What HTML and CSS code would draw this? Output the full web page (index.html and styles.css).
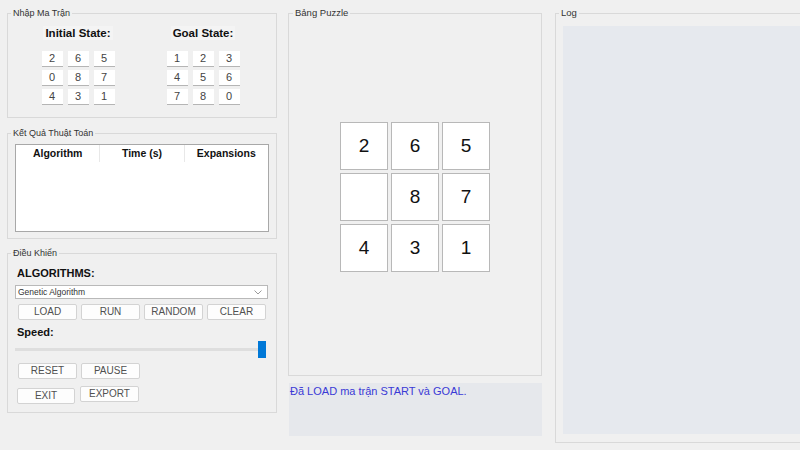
FILE: index.html
```html
<!DOCTYPE html>
<html>
<head>
<meta charset="utf-8">
<link rel="stylesheet" href="styles.css">
</head>
<body>
<div class="app">
  <div class="col col-left">
    <fieldset class="group g-matrix">
      <legend>Nhập Ma Trận</legend>
      <div class="states">
        <div class="state">
          <div class="state-title">Initial State:</div>
          <div class="cells">
            <div class="cell">2</div><div class="cell">6</div><div class="cell">5</div>
            <div class="cell">0</div><div class="cell">8</div><div class="cell">7</div>
            <div class="cell">4</div><div class="cell">3</div><div class="cell">1</div>
          </div>
        </div>
        <div class="state">
          <div class="state-title">Goal State:</div>
          <div class="cells">
            <div class="cell">1</div><div class="cell">2</div><div class="cell">3</div>
            <div class="cell">4</div><div class="cell">5</div><div class="cell">6</div>
            <div class="cell">7</div><div class="cell">8</div><div class="cell">0</div>
          </div>
        </div>
      </div>
    </fieldset>

    <fieldset class="group g-results">
      <legend>Kết Quả Thuật Toán</legend>
      <div class="table">
        <div class="thead">
          <div class="th">Algorithm</div>
          <div class="th">Time (s)</div>
          <div class="th">Expansions</div>
        </div>
      </div>
    </fieldset>

    <fieldset class="group g-control">
      <legend>Điều Khiển</legend>
      <div class="control-body">
        <div class="label">ALGORITHMS:</div>
        <div class="select">
          <span>Genetic Algorithm</span>
          <svg class="chev" width="8" height="5" viewBox="0 0 8 5"><path d="M0.5 0.5 L4 4 L7.5 0.5" fill="none" stroke="#9a9a9a" stroke-width="1"/></svg>
        </div>
        <div class="btn-row">
          <div class="btn">LOAD</div>
          <div class="btn">RUN</div>
          <div class="btn">RANDOM</div>
          <div class="btn">CLEAR</div>
        </div>
        <div class="label label-speed">Speed:</div>
        <div class="slider">
          <div class="track"></div>
          <div class="thumb"></div>
        </div>
        <div class="btn-row row-reset">
          <div class="btn">RESET</div>
          <div class="btn">PAUSE</div>
        </div>
        <div class="btn-row row-exit">
          <div class="btn btn-exit">EXIT</div>
          <div class="btn btn-export">EXPORT</div>
        </div>
      </div>
    </fieldset>
  </div>

  <div class="col col-mid">
    <fieldset class="group g-puzzle">
      <legend>Bảng Puzzle</legend>
      <div class="board">
        <div class="tile">2</div><div class="tile">6</div><div class="tile">5</div>
        <div class="tile"></div><div class="tile">8</div><div class="tile">7</div>
        <div class="tile">4</div><div class="tile">3</div><div class="tile">1</div>
      </div>
    </fieldset>
    <div class="status">Đã LOAD ma trận START và GOAL.</div>
  </div>

  <div class="col col-right">
    <fieldset class="group g-log">
      <legend>Log</legend>
      <div class="log-wrap"><div class="log-area"></div></div>
    </fieldset>
  </div>
</div>
</body>
</html>
```
FILE: styles.css
```css
html, body {
  margin: 0;
  padding: 0;
  background: #f0f0f0;
  width: 800px;
  height: 450px;
  overflow: hidden;
  font-family: "Liberation Sans", Arial, sans-serif;
  color: #222;
}

.app {
  display: flex;
  align-items: flex-start;
  padding: 7px 0 0 7px;
}

.col {
  display: flex;
  flex-direction: column;
  flex-shrink: 0;
}

.col-left { width: 270px; margin-right: 11px; }
.col-mid { width: 254px; margin-right: 13px; }
.col-right { width: 262px; }

.group {
  box-sizing: border-box;
  margin: 0;
  padding: 0;
  border: 1px solid #d9d9d9;
  min-width: 0;
}

.group legend {
  font-size: 9px;
  line-height: 12px;
  color: #333;
  padding: 0 2px;
  margin-left: 3px;
}

/* Matrix input */
.g-matrix { height: 111px; }

.states {
  display: flex;
  padding-left: 12px;
  gap: 9px;
}

.state {
  width: 116px;
  display: flex;
  flex-direction: column;
  align-items: center;
}

.state-title {
  margin-top: 7px;
  font-size: 11.5px;
  line-height: 14px;
  font-weight: bold;
  color: #111;
  background: #f4f4f4;
  padding: 0 2px;
}

.cells {
  margin-top: 11px;
  display: grid;
  grid-template-columns: repeat(3, 21px);
  grid-auto-rows: 16px;
  column-gap: 5px;
  row-gap: 3px;
}

.cell {
  box-sizing: border-box;
  background: #fff;
  border-bottom: 1px solid #b5b5b5;
  font-size: 11px;
  line-height: 15px;
  text-align: center;
  color: #444;
}

/* Results */
.g-results { height: 112px; margin-top: 9px; }

.table {
  box-sizing: border-box;
  margin: 5px 0 0 7px;
  width: 254px;
  height: 88px;
  background: #fff;
  border: 1px solid #a8a8a8;
}

.thead {
  display: flex;
  height: 17px;
}

.th {
  flex: 1;
  font-size: 10.5px;
  font-weight: bold;
  line-height: 16px;
  text-align: center;
  color: #111;
  border-right: 1px solid #e8e8e8;
}
.th:last-child { border-right: none; }

/* Control */
.g-control { height: 166px; margin-top: 8px; }

.control-body { padding-left: 7px; }

.label {
  margin-top: 7px;
  margin-left: 2px;
  font-size: 11px;
  line-height: 14px;
  font-weight: bold;
  color: #111;
}

.select {
  box-sizing: border-box;
  margin-top: 5px;
  width: 253px;
  height: 14px;
  background: #fff;
  border: 1px solid #b9b9b9;
  display: flex;
  align-items: center;
  justify-content: space-between;
  padding: 0 5px 0 2px;
  font-size: 8.5px;
  color: #333;
}

.chev { display: block; }

.btn-row {
  display: flex;
  gap: 4px;
  margin-left: 3px;
  margin-top: 5px;
}

.btn {
  box-sizing: border-box;
  width: 59px;
  height: 16px;
  background: #fdfdfd;
  border: 1px solid #d3d3d3;
  border-radius: 2px;
  font-size: 10px;
  line-height: 14px;
  text-align: center;
  color: #505050;
}

.label-speed { margin-top: 5px; }

.slider {
  margin-top: 2px;
  width: 252px;
  height: 17px;
  display: flex;
  align-items: center;
}

.track {
  width: 247px;
  height: 3px;
  background: #dedede;
}

.thumb {
  margin-left: -4px;
  width: 8px;
  height: 17px;
  background: #0078d7;
}

.row-reset { margin-top: 5px; }
.row-exit { margin-top: 7px; margin-left: 2px; gap: 5px; align-items: flex-start; }
.btn-exit { margin-top: 2px; width: 58px; }

/* Puzzle */
.g-puzzle { height: 369px; }

.g-puzzle legend { font-size: 9.5px; margin-left: 4px; }

.board {
  margin: 103px auto 0;
  display: grid;
  grid-template-columns: repeat(3, 48px);
  grid-auto-rows: 48px;
  gap: 3px;
  width: 150px;
}

.tile {
  box-sizing: border-box;
  background: #fff;
  border: 1px solid #b8b8b8;
  font-size: 19px;
  line-height: 46px;
  text-align: center;
  color: #111;
}

.status {
  box-sizing: border-box;
  margin: 7px 0 0 1px;
  width: 253px;
  height: 53px;
  background: #e6e8ec;
  padding: 1px 0 0 1px;
  font-size: 11px;
  line-height: 14px;
  color: #3a3ad6;
}

/* Log */
.g-log { height: 436px; width: 262px; }
.g-log legend { font-size: 9.5px; }

.log-wrap {
  padding: 7px 0 7px 7px;
  height: 408px;
}

.log-area {
  height: 100%;
  background: #e6e9ee;
}
```
